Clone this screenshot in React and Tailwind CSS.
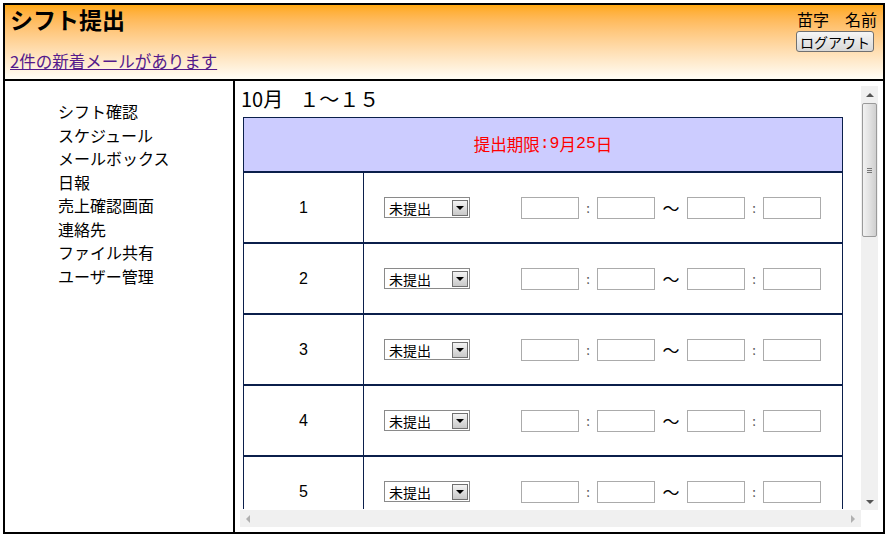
const jp = { fontFamily: '"Noto Sans CJK JP", "Liberation Sans", sans-serif' };
const mono = { fontFamily: '"Liberation Mono", monospace' };

const menu = ['シフト確認', 'スケジュール', 'メールボックス', '日報', '売上確認画面', '連絡先', 'ファイル共有', 'ユーザー管理'];
const days = Array.from({ length: 15 }, (_, i) => i + 1);

function Arrow({ dir, color = '#333' }) {
  const pts = {
    up: '0,5 4,1 8,5',
    down: '0,1 4,5 8,1',
    left: '5,0 1,4 5,8',
    right: '1,0 5,4 1,8',
  }[dir];
  const size = dir === 'up' || dir === 'down' ? { w: 8, h: 6 } : { w: 6, h: 8 };
  return (
    <svg width={size.w} height={size.h} viewBox={`0 0 ${size.w} ${size.h}`}>
      <polygon points={pts} fill={color} />
    </svg>
  );
}

function Select() {
  return (
    <div className="flex h-[21px] w-[86px] items-center justify-between border border-[#8a8a8a] bg-white pl-[4px] pr-[1px]">
      <span className="text-[14px] leading-none text-black">未提出</span>
      <div className="flex h-[16px] w-[16px] items-center justify-center border border-[#707070] bg-linear-to-b from-[#f4f4f4] to-[#c9c9c9]">
        <Arrow dir="down" color="#000" />
      </div>
    </div>
  );
}

function Box() {
  return <div className="h-[22px] w-[58px] border border-[#ababab] bg-white" />;
}

function Row({ n }) {
  return (
    <div className="flex h-[71px] border-b-2 border-[#0b1f4b]">
      <div className="flex w-[120px] shrink-0 items-center justify-center border-r border-[#0b1f4b] text-[16px]" style={{ fontFamily: '"Liberation Sans", sans-serif' }}>
        {n}
      </div>
      <div className="flex items-center pl-[20px]">
        <Select />
        <div className="ml-[51px] flex items-center">
          <Box />
          <span className="w-[18px] text-center text-[13px] text-[#555]">:</span>
          <Box />
          <span className="w-[32px] text-center text-[17px] leading-none">〜</span>
          <Box />
          <span className="w-[18px] text-center text-[13px] text-[#555]">:</span>
          <Box />
        </div>
      </div>
    </div>
  );
}

export default function App() {
  return (
    <div className="h-[537px] w-[888px] bg-white pl-[3px] pt-[3px] text-black" style={jp}>
      <div className="flex h-[531px] w-[882px] flex-col border-2 border-black">
        {/* ヘッダー */}
        <header className="flex h-[76px] shrink-0 justify-between border-b-2 border-black bg-linear-to-b from-[#ffa80a] to-[#fffdf6]">
          <div className="flex flex-col pl-[5px]">
            <h1 className="text-[23px] font-bold leading-[29px]">シフト提出</h1>
            <a href="#" className="mt-[15px] text-[16.5px] leading-[24px] text-[#551a8b] underline">
              2件の新着メールがあります
            </a>
          </div>
          <div className="flex flex-col items-end pr-[6px] pt-[3px]">
            <div className="text-[16px] leading-[22px]">苗字　名前</div>
            <button className="mr-[3px] mt-[1px] flex h-[21px] w-[78px] items-center justify-center rounded-[3px] border border-[#707070] bg-linear-to-b from-[#f6f6f6] to-[#d8d8d8] text-[14px] leading-none">
              ログアウト
            </button>
          </div>
        </header>

        <div className="flex flex-1">
          {/* メニュー */}
          <nav className="w-[230px] shrink-0 border-r-2 border-black pl-[53px] pt-[19px]">
            <ul>
              {menu.map((m) => (
                <li key={m} className="text-[16px] leading-[23.5px]">
                  {m}
                </li>
              ))}
            </ul>
          </nav>

          {/* コンテンツ */}
          <main className="flex-1 p-[5px]">
            <div className="flex h-full flex-col">
              <div className="flex flex-1 overflow-hidden">
                <div className="h-[423px] flex-1 overflow-hidden">
                  <h2 className="pl-[1px] text-[20px] leading-[26px]">
                    10月<span className="ml-[16px]">１～１５</span>
                  </h2>
                  <div className="ml-[3px] mt-[5px] w-[600px] border-x border-t border-[#0b1f4b]">
                    <div className="flex h-[55px] items-center justify-center border-b-2 border-[#0b1f4b] bg-[#ccccff] text-[16.5px] text-[#ff0000]">
                      提出期限<span style={mono}>:9</span>月<span style={mono}>25</span>日
                    </div>
                    {days.map((d) => (
                      <Row key={d} n={d} />
                    ))}
                  </div>
                </div>
                {/* 縦スクロールバー */}
                <div className="flex w-[17px] flex-col bg-[#f0f0f0]">
                  <div className="flex h-[17px] items-center justify-center">
                    <Arrow dir="up" color="#555" />
                  </div>
                  <div className="mx-[1px] flex h-[134px] items-center justify-center rounded-[2px] border border-[#9a9a9a] bg-linear-to-r from-[#f2f2f2] via-[#e2e2e2] to-[#cfcfcf]">
                    <div className="flex flex-col gap-[1px]">
                      <div className="h-[1px] w-[5px] bg-[#777]" />
                      <div className="h-[1px] w-[5px] bg-[#777]" />
                      <div className="h-[1px] w-[5px] bg-[#777]" />
                    </div>
                  </div>
                  <div className="flex-1" />
                  <div className="flex h-[17px] items-center justify-center">
                    <Arrow dir="down" color="#555" />
                  </div>
                </div>
              </div>
              {/* 横スクロールバー */}
              <div className="flex h-[17px] shrink-0">
                <div className="flex flex-1 items-center justify-between bg-[#f0f0f0] px-[5px]">
                  <Arrow dir="left" color="#b0b0b0" />
                  <Arrow dir="right" color="#b0b0b0" />
                </div>
                <div className="w-[17px] bg-white" />
              </div>
            </div>
          </main>
        </div>
      </div>
    </div>
  );
}
